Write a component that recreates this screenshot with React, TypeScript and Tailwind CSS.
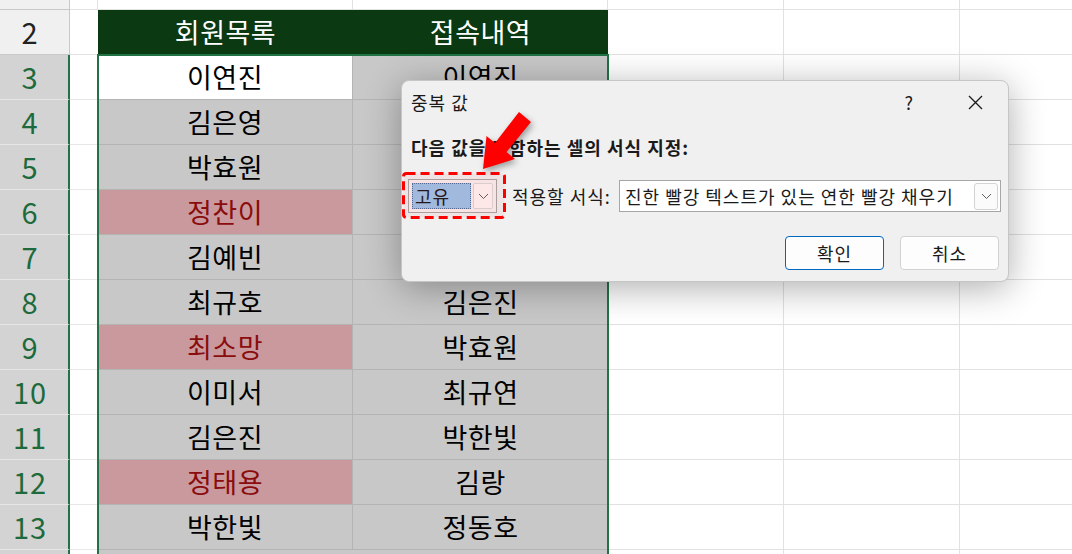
import React from "react";

type Cell = { t: string; pink?: boolean; active?: boolean };
type RowData = { n: number; b: Cell; c: Cell };

const rows: RowData[] = [
  { n: 3, b: { t: "이연진", active: true }, c: { t: "이연진" } },
  { n: 4, b: { t: "김은영" }, c: { t: "최규호" } },
  { n: 5, b: { t: "박효원" }, c: { t: "김예빈" } },
  { n: 6, b: { t: "정찬이", pink: true }, c: { t: "이미서" } },
  { n: 7, b: { t: "김예빈" }, c: { t: "김은영" } },
  { n: 8, b: { t: "최규호" }, c: { t: "김은진" } },
  { n: 9, b: { t: "최소망", pink: true }, c: { t: "박효원" } },
  { n: 10, b: { t: "이미서" }, c: { t: "최규연" } },
  { n: 11, b: { t: "김은진" }, c: { t: "박한빛" } },
  { n: 12, b: { t: "정태용", pink: true }, c: { t: "김랑" } },
  { n: 13, b: { t: "박한빛" }, c: { t: "정동호" } },
];

function SheetCell({ cell, right }: { cell: Cell; right?: boolean }) {
  const bg = cell.active ? "bg-white" : cell.pink ? "bg-[#c9999e]" : "bg-[#c8c8c8]";
  const color = cell.pink ? "text-[#8a0c0c]" : "text-black";
  return (
    <div
      className={`w-[255px] shrink-0 h-full flex items-center justify-center text-[27px] tracking-[0.5px] border-b border-b-[#b4b4b4] ${
        right ? "" : "border-r border-r-[#b4b4b4]"
      } ${bg} ${color}`}
    >
      {cell.t}
    </div>
  );
}

function Plain() {
  return (
    <>
      <div className="w-[176px] shrink-0 h-full bg-white border-r border-b border-[#e1e1e1]" />
      <div className="w-[176px] shrink-0 h-full bg-white border-r border-b border-[#e1e1e1]" />
      <div className="flex-1 h-full bg-white border-b border-[#e1e1e1]" />
    </>
  );
}

function Chevron() {
  return (
    <svg width="11" height="7" viewBox="0 0 11 7" fill="none">
      <path d="M1 1l4.5 4.5L10 1" stroke="#606060" strokeWidth="1" />
    </svg>
  );
}

function Dialog() {
  return (
    <div className="absolute left-[401px] top-[80px] w-[608px] h-[202px] rounded-[8px] bg-[#f0f0f0] border border-[#c6c6c6] shadow-[0_6px_36px_rgba(0,0,0,0.32)] flex flex-col text-[18px] tracking-[1px] text-[#1a1a1a]">
      <div className="h-[42px] flex items-center pl-[9px] pr-[25px]">
        <span>중복 값</span>
        <span className="ml-auto text-[18px] mr-[54px]">?</span>
        <svg width="15" height="15" viewBox="0 0 15 15">
          <path d="M1 1l13 13M14 1L1 14" stroke="#1a1a1a" strokeWidth="1.3" />
        </svg>
      </div>
      <div className="mt-[12px] h-[24px] flex items-center pl-[9px] font-bold">
        다음 값을 포함하는 셀의 서식 지정:
      </div>
      <div className="mt-[20px] h-[34px] flex items-center pl-[6px]">
        <div className="w-[89px] shrink-0 h-[34px] border border-[#a6a6a6] bg-[#f7f0f0] flex items-center p-[3px] gap-[2px]">
          <div className="w-[59px] h-[26px] bg-[#9dc3ea] border border-dotted border-[#4a6f9a] flex items-center pl-[2px]">
            고유
          </div>
          <div className="flex-1 h-[26px] bg-[#fdf4f4] border border-[#d8d8d8] rounded-[2px] flex items-center justify-center">
            <Chevron />
          </div>
        </div>
        <span className="ml-[15px] w-[107px] shrink-0">적용할 서식:</span>
        <div className="w-[382px] h-[32px] bg-white border border-[#a6a6a6] flex items-center pl-[5px] pr-[2px]">
          <span>진한 빨강 텍스트가 있는 연한 빨강 채우기</span>
          <div className="ml-auto w-[24px] h-[27px] bg-[#fbfbfb] border border-[#d4d4d4] rounded-[3px] flex items-center justify-center">
            <Chevron />
          </div>
        </div>
      </div>
      <div className="mt-[23px] flex justify-end gap-[16px] pr-[9px]">
        <button className="w-[99px] h-[34px] bg-[#fdfdfd] border-[1.5px] border-[#0067c0] rounded-[4px]">
          확인
        </button>
        <button className="w-[99px] h-[34px] bg-[#fdfdfd] border border-[#d2d2d2] rounded-[4px]">
          취소
        </button>
      </div>
    </div>
  );
}

export default function App() {
  return (
    <div className="relative w-[1072px] h-[554px] overflow-hidden bg-white font-['Noto_Sans_CJK_KR','Noto_Sans',sans-serif]">
      {/* row 1 (partial) */}
      <div className="flex h-[10px]">
        <div className="w-[70px] shrink-0 h-full bg-[#f0f0f0] border-r border-b border-[#c8c8c8]" />
        <div className="w-[28px] shrink-0 h-full border-r border-b border-[#e1e1e1]" />
        <div className="w-[255px] shrink-0 h-full border-r border-b border-[#e1e1e1]" />
        <div className="w-[255px] shrink-0 h-full border-r border-b border-[#e1e1e1]" />
        <Plain />
      </div>
      {/* row 2 header */}
      <div className="flex h-[45px]">
        <div className="w-[70px] shrink-0 h-full bg-[#f0f0f0] border-r border-b border-[#c8c8c8] flex items-center justify-center pr-[10px] text-[29px] text-[#222]">
          2
        </div>
        <div className="w-[28px] shrink-0 h-full border-b border-[#e1e1e1]" />
        <div className="w-[510px] shrink-0 h-full bg-[#0b3912] flex text-white text-[27px] tracking-[0.5px]">
          <div className="w-[255px] flex items-center justify-center">회원목록</div>
          <div className="w-[255px] flex items-center justify-center">접속내역</div>
        </div>
        <Plain />
      </div>
      {rows.map((r) => (
        <div key={r.n} className="flex h-[45px]">
          <div className="w-[70px] shrink-0 h-full bg-[#d3d3d3] border-b border-b-[#e6e6e6] border-r-2 border-r-[#217346] flex items-center justify-center pr-[8px] text-[29px] tracking-[1px] text-[#1d6a3c]">
            {r.n}
          </div>
          <div className="w-[28px] shrink-0 h-full bg-white border-b border-[#e8e8e8]" />
          <SheetCell cell={r.b} />
          <SheetCell cell={r.c} right />
          <Plain />
        </div>
      ))}
      <div className="flex h-[10px]">
        <div className="w-[70px] shrink-0 h-full bg-[#d3d3d3] border-r-2 border-r-[#217346]" />
        <div className="w-[28px] shrink-0 h-full bg-white" />
        <div className="w-[510px] shrink-0 h-full bg-[#c8c8c8]" />
        <Plain />
      </div>

      {/* selection outline */}
      <div className="absolute left-[97px] top-[54px] w-[512px] h-[520px] border-2 border-[#217346] border-b-0" />

      <Dialog />

      {/* red dashed highlight */}
      <svg className="absolute left-[401px] top-[171px]" width="106" height="49" viewBox="0 0 106 49">
        <rect
          x="2.5"
          y="2.5"
          width="101"
          height="44"
          rx="3"
          fill="rgba(255,0,0,0.05)"
          stroke="#ff0000"
          strokeWidth="3"
          strokeDasharray="9 5"
        />
      </svg>

      {/* red arrow */}
      <svg
        className="absolute left-[468px] top-[103px] drop-shadow-[2px_3px_3px_rgba(0,0,0,0.35)]"
        width="72"
        height="72"
        viewBox="0 0 72 72"
      >
        <polygon
          points="15,66 47,56 38.5,49 63,19 51,9 27,40 18.5,33"
          fill="#ff0000"
        />
      </svg>
    </div>
  );
}
